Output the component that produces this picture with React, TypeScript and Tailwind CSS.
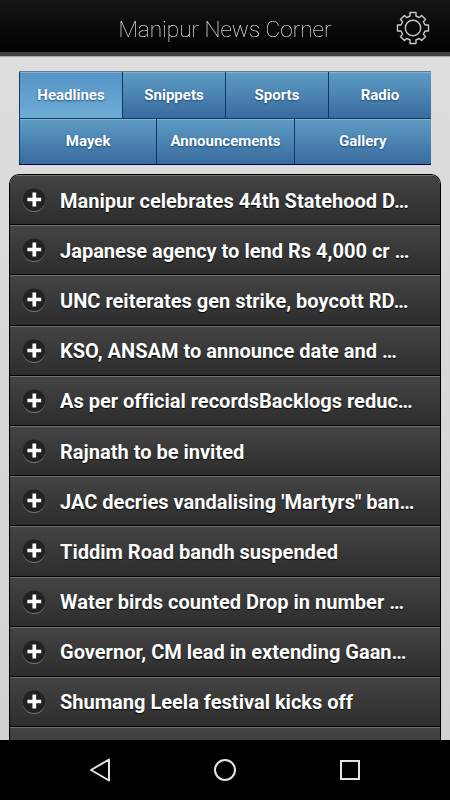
import React from 'react';

interface Tab {
  label: string;
  active?: boolean;
}

const topTabs: Tab[] = [
  { label: 'Headlines', active: true },
  { label: 'Snippets' },
  { label: 'Sports' },
  { label: 'Radio' }
];

const bottomTabs: Tab[] = [{ label: 'Mayek' }, { label: 'Announcements' }, { label: 'Gallery' }];

const headlines = [
  'Manipur celebrates 44th Statehood D…',
  'Japanese agency to lend Rs 4,000 cr …',
  'UNC reiterates gen strike, boycott RD…',
  'KSO, ANSAM to announce date and …',
  'As per official recordsBacklogs reduc…',
  'Rajnath to be invited',
  'JAC decries vandalising \'Martyrs" ban…',
  'Tiddim Road bandh suspended',
  'Water birds counted Drop in number …',
  'Governor, CM lead in extending Gaan…',
  'Shumang Leela festival kicks off',
  ''
];

const GearIcon = () => (
  <svg width="34" height="34" viewBox="-17 -17 34 34" fill="none" stroke="#c8c8c8" strokeWidth="1.4" strokeLinejoin="round">
    <path d="M-3-15.5H3V-12L6.2-10.4L8.6-12.6L12.6-8.6L10.4-6.2L12-3H15.5V3H12L10.4 6.2L12.6 8.6L8.6 12.6L6.2 10.4L3 12V15.5H-3V12L-6.2 10.4L-8.6 12.6L-12.6 8.6L-10.4 6.2L-12 3H-15.5V-3H-12L-10.4-6.2L-12.6-8.6L-8.6-12.6L-6.2-10.4L-3-12Z" />
    <circle r="7.7" />
  </svg>
);

const PlusBadge = () => (
  <svg width="24" height="25" viewBox="0 0 24 25" className="shrink-0">
    <circle cx="12" cy="12.8" r="11.2" fill="#777" />
    <circle cx="12" cy="11.7" r="11.3" fill="#222" />
    <path d="M12.3 4.6V18.4M5.4 11.5H19.2" stroke="#fff" strokeWidth="3.7" />
  </svg>
);

const TabRow: React.FC<{ tabs: Tab[]; className: string }> = ({ tabs, className }) => (
  <div className={`grid ${className}`}>
    {tabs.map((tab) => (
      <button
        key={tab.label}
        className={`flex items-center justify-center border-l border-[#0c3a60] text-[15px] font-bold text-white shadow-[inset_0_1px_0_#83b2d3] [text-shadow:0_1px_2px_#194b7e] bg-linear-to-b ${
          tab.active ? 'from-[#5393c5] to-[#6facd5]' : 'from-[#5f9cc5] to-[#396b9e]'
        }`}
      >
        {tab.label}
      </button>
    ))}
  </div>
);

export default function App() {
  return (
    <div className="flex h-[800px] w-[450px] flex-col overflow-hidden bg-[#ddd] font-['Roboto',sans-serif]">
      <header className="z-10 grid h-14 shrink-0 grid-cols-[75px_1fr_75px] items-center border-b-4 border-[#424242] bg-linear-to-b from-[#151515] to-[#030303] shadow-[0_1px_1px_#aaa]">
        <h1 className="col-start-2 pt-[7px] text-center text-[22.6px] leading-8 font-thin whitespace-nowrap text-white opacity-95 will-change-[opacity]">
          Manipur News Corner
        </h1>
        <div className="flex justify-center pt-1">
          <GearIcon />
        </div>
      </header>

      <main className="min-h-0 flex-1 overflow-hidden bg-linear-to-b from-[#dedede] to-[#d1d1d1] px-[9px] pt-[15px]">
        <nav className="mx-2.5 h-[94px] border-t border-t-[#667b88]">
          <TabRow tabs={topTabs} className="h-[46px] grid-cols-4 [&>button]:pt-px" />
          <TabRow tabs={bottomTabs} className="h-[47px] grid-cols-3 border-t border-b border-t-[#0d3b60] border-b-[#00004c] [&>button]:pb-px" />
        </nav>

        <ul className="mt-[9px] overflow-hidden rounded-t-[10px] border border-b-0 border-black">
          {headlines.map((text, i) => (
            <li
              key={i}
              className="flex h-[50.2px] items-center border-b border-black bg-linear-to-b from-[#444] to-[#2d2d2d] pt-0.5 pl-3 shadow-[inset_0_1px_0_#727272]"
            >
              <PlusBadge />
              <span className="ml-3.5 text-[20.03px] leading-7 font-bold whitespace-pre text-white [font-variant-ligatures:none] [text-shadow:0_1px_1px_#000]">
                {text}
              </span>
            </li>
          ))}
        </ul>
      </main>

      <footer className="flex h-[60px] shrink-0 items-center justify-center bg-black">
        <svg width="450" height="60" viewBox="0 0 450 60" fill="none" stroke="#e4e4e4" strokeWidth="2">
          <path d="M109 19.5V40.5L91 30Z" strokeLinejoin="round" />
          <circle cx="225" cy="30" r="10" />
          <rect x="341" y="21" width="18" height="18" />
        </svg>
      </footer>
    </div>
  );
}
